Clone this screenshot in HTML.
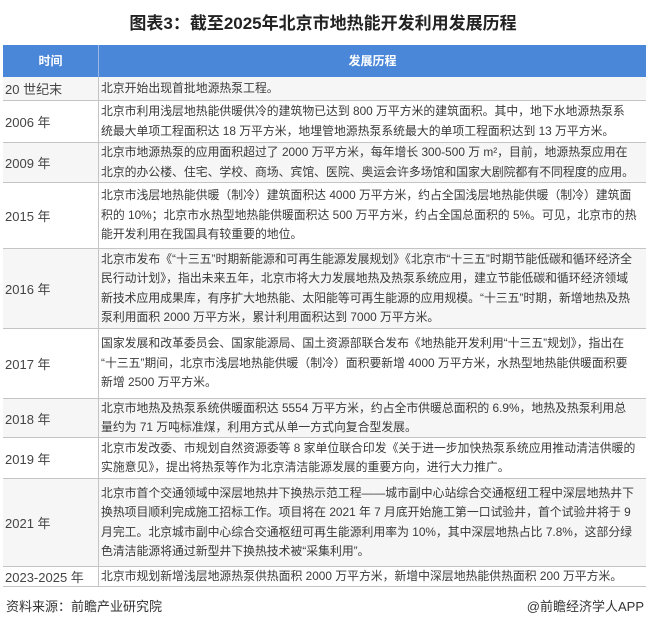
<!DOCTYPE html>
<html><head><meta charset="utf-8"><style>
*{margin:0;padding:0;box-sizing:border-box}
body{width:646px;height:630px;background:#fff;font-family:"Liberation Sans","Noto Sans CJK SC",sans-serif;color:#3a3a3a;position:relative;overflow:hidden}
.title{position:absolute;top:9px;left:0;width:646px;text-align:center;font-size:17px;font-weight:bold;color:#222}
.hdr{position:absolute;top:45px;left:3px;width:643px;height:32px;background:#4a87d9;color:#fff;font-weight:bold;font-size:12px}
.hdr div{position:absolute;top:0;height:32px;line-height:32px;text-align:center}
.row{position:absolute;left:3px;width:643px;border-bottom:1px solid #c4c4c4;font-size:12px}
.row:nth-child(odd){background:#f6f6f6}
.y{position:absolute;left:2px;top:0;bottom:0;display:flex;align-items:center;font-size:13px;color:#444}
.t{position:absolute;left:95px;top:0;bottom:0;right:0;border-left:1px solid #c4c4c4;display:flex;flex-direction:column;justify-content:center;padding-left:2px;line-height:19.5px;white-space:nowrap;font-size:11.85px}
.foot{position:absolute;top:596px;font-size:13px;color:#333}
</style></head><body>
<div class="title">图表3：截至2025年北京市地热能开发利用发展历程</div>
<div class="hdr"><div style="left:0;width:95px">时间</div><div style="left:95px;width:548px;border-left:1px solid #9bb8e6">发展历程</div></div>
<div id="rows">
<div class="row" style="top:77px;height:24px"><div class="y">20 世纪末</div><div class="t"><div>北京开始出现首批地源热泵工程。</div></div></div>
<div class="row" style="top:101px;height:42px"><div class="y">2006 年</div><div class="t"><div>北京市利用浅层地热能供暖供冷的建筑物已达到 800 万平方米的建筑面积。其中，地下水地源热泵系</div><div>统最大单项工程面积达 18 万平方米，地埋管地源热泵系统最大的单项工程面积达到 13 万平方米。</div></div></div>
<div class="row" style="top:143px;height:40px"><div class="y">2009 年</div><div class="t"><div>北京市地源热泵的应用面积超过了 2000 万平方米，每年增长 300-500 万 m²，目前，地源热泵应用在</div><div>北京的办公楼、住宅、学校、商场、宾馆、医院、奥运会许多场馆和国家大剧院都有不同程度的应用。</div></div></div>
<div class="row" style="top:183px;height:66px"><div class="y">2015 年</div><div class="t"><div>北京市浅层地热能供暖（制冷）建筑面积达 4000 万平方米，约占全国浅层地热能供暖（制冷）建筑面</div><div>积的 10%；北京市水热型地热能供暖面积达 500 万平方米，约占全国总面积的 5%。可见，北京市的热</div><div>能开发利用在我国具有较重要的地位。</div></div></div>
<div class="row" style="top:249px;height:80px"><div class="y">2016 年</div><div class="t"><div>北京市发布《“十三五”时期新能源和可再生能源发展规划》《北京市“十三五”时期节能低碳和循环经济全</div><div>民行动计划》，指出未来五年，北京市将大力发展地热及热泵系统应用，建立节能低碳和循环经济领域</div><div>新技术应用成果库，有序扩大地热能、太阳能等可再生能源的应用规模。“十三五”时期，新增地热及热</div><div>泵利用面积 2000 万平方米，累计利用面积达到 7000 万平方米。</div></div></div>
<div class="row" style="top:329px;height:70px"><div class="y">2017 年</div><div class="t"><div>国家发展和改革委员会、国家能源局、国土资源部联合发布《地热能开发利用“十三五”规划》，指出在</div><div>“十三五”期间，北京市浅层地热能供暖（制冷）面积要新增 4000 万平方米，水热型地热能供暖面积要</div><div>新增 2500 万平方米。</div></div></div>
<div class="row" style="top:399px;height:39px"><div class="y">2018 年</div><div class="t"><div>北京市地热及热泵系统供暖面积达 5554 万平方米，约占全市供暖总面积的 6.9%，地热及热泵利用总</div><div>量约为 71 万吨标准煤，利用方式从单一方式向复合型发展。</div></div></div>
<div class="row" style="top:438px;height:41px"><div class="y">2019 年</div><div class="t"><div>北京市发改委、市规划自然资源委等 8 家单位联合印发《关于进一步加快热泵系统应用推动清洁供暖的</div><div>实施意见》，提出将热泵等作为北京清洁能源发展的重要方向，进行大力推广。</div></div></div>
<div class="row" style="top:479px;height:88px"><div class="y">2021 年</div><div class="t"><div>北京市首个交通领域中深层地热井下换热示范工程——城市副中心站综合交通枢纽工程中深层地热井下</div><div>换热项目顺利完成施工招标工作。项目将在 2021 年 7 月底开始施工第一口试验井，首个试验井将于 9</div><div>月完工。北京城市副中心综合交通枢纽可再生能源利用率为 10%，其中深层地热占比 7.8%，这部分绿</div><div>色清洁能源将通过新型井下换热技术被“采集利用”。</div></div></div>
<div class="row" style="top:567px;height:20px"><div class="y">2023-2025 年</div><div class="t"><div>北京市规划新增浅层地源热泵供热面积 2000 万平方米，新增中深层地热能供热面积 200 万平方米。</div></div></div>
</div>
<div class="foot" style="left:6px">资料来源：前瞻产业研究院</div>
<div class="foot" style="right:2px">@前瞻经济学人APP</div>
</body></html>
